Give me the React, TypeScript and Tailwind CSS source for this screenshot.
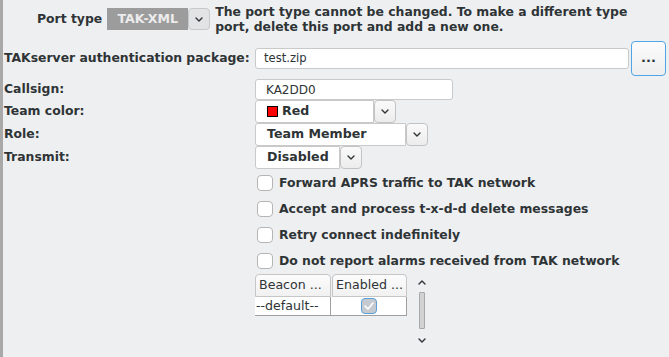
import React from 'react';

// small chevron used in combo buttons and the scrollbar
function Chevron({ up = false, className = '' }: { up?: boolean; className?: string }) {
  return (
    <svg width="8" height="5" viewBox="0 0 8 5" className={className}>
      <path
        d={up ? 'M1 4 L4 1 L7 4' : 'M1 1 L4 4 L7 1'}
        fill="none"
        stroke="#2e3436"
        strokeWidth="1.4"
        strokeLinecap="round"
        strokeLinejoin="round"
      />
    </svg>
  );
}

function ComboButton() {
  return (
    <div className="w-[22px] h-[23px] flex items-center justify-center bg-gradient-to-b from-[#fafafa] to-[#ececec] border border-[#c3c3c3] rounded-[4px]">
      <Chevron />
    </div>
  );
}

function Select({ width, children }: { width: string; children: React.ReactNode }) {
  return (
    <div className="flex items-center h-[23px]">
      <div className={`${width} h-[23px] bg-white border border-[#c9c9c9] rounded-l-[3px] flex items-center pl-[11px] font-bold text-[12.6px]`}>
        {children}
      </div>
      <ComboButton />
    </div>
  );
}

function Checkbox({ label }: { label: string }) {
  return (
    <div className="h-[26px] flex items-center pl-[2px]">
      <div className="w-[16px] h-[16px] bg-white border border-[#b5b5b5] rounded-[4px]" />
      <span className="ml-[6px] font-bold text-[12.4px] whitespace-nowrap">{label}</span>
    </div>
  );
}

function Label({ children }: { children: React.ReactNode }) {
  return <div className="w-[251px] font-bold text-[12.4px] leading-none whitespace-nowrap">{children}</div>;
}

export default function App() {
  return (
    <div className="w-[669px] h-[357px] overflow-hidden bg-[#eeeff1] border-l-[3px] border-[#a9a9a9] text-[#2e3436] font-['DejaVu_Sans',sans-serif]">
      <div className="pl-[1px]">
        {/* Port type */}
        <div className="pt-[4px] flex items-center">
          <span className="ml-[33px] font-bold text-[12.4px]">Port type</span>
          <div className="ml-[5px] w-[81px] h-[22px] bg-[#9c9c9c] flex items-center justify-center text-[#ececec] font-bold text-[12.6px]">
            TAK-XML
          </div>
          <div className="w-[22px] h-[22px] flex items-center justify-center bg-[#e2e3e5] border border-[#c8c8c8] rounded-[4px]">
            <Chevron />
          </div>
          <div className="ml-[5px] font-bold text-[12.4px] leading-[15px] whitespace-nowrap">
            <div>The port type cannot be changed. To make a different type</div>
            <div>port, delete this port and add a new one.</div>
          </div>
        </div>

        {/* auth package */}
        <div className="mt-[7px] h-[35px] flex items-center">
          <Label>TAKserver authentication package:</Label>
          <div className="w-[374px] h-[21px] bg-white border border-[#c9c9c9] rounded-[3px] flex items-center pl-[8px] text-[11.6px]">
            test.zip
          </div>
          <div className="ml-[2px] w-[35px] h-[35px] border border-[#4fa6e6] rounded-[4px] bg-gradient-to-b from-[#fbfbfb] to-[#eeeeee] flex items-center justify-center pb-[2px] text-[13px] font-bold">
            ...
          </div>
        </div>

        {/* callsign */}
        <div className="mt-[3px] h-[21px] flex items-center">
          <Label>Callsign:</Label>
          <div className="w-[198px] h-[21px] bg-white border border-[#c9c9c9] rounded-[3px] flex items-center pl-[10px] text-[12px]">
            KA2DD0
          </div>
        </div>

        <div className="h-[23px] flex items-center">
          <Label>Team color:</Label>
          <Select width="w-[119px]">
            <span className="w-[11px] h-[11px] bg-[#ff0000] border border-black mr-[4px]" />
            Red
          </Select>
        </div>

        <div className="h-[23px] flex items-center">
          <Label>Role:</Label>
          <Select width="w-[151px]">Team Member</Select>
        </div>

        <div className="h-[23px] flex items-center">
          <Label>Transmit:</Label>
          <Select width="w-[85px]">Disabled</Select>
        </div>

        {/* options */}
        <div className="flex pt-[1px]">
          <div className="w-[251px]" />
          <div>
            <Checkbox label="Forward APRS traffic to TAK network" />
            <Checkbox label="Accept and process t-x-d-d delete messages" />
            <Checkbox label="Retry connect indefinitely" />
            <Checkbox label="Do not report alarms received from TAK network" />

            {/* beacon table */}
            <div className="flex">
              <div className="w-[152px] text-[12.6px]">
                <div className="flex h-[23px] gap-[1px]">
                  <div className="w-[76px] bg-gradient-to-b from-[#fcfcfc] to-[#f1f1f1] border border-[#c6c6c6] rounded-t-[4px] flex items-center pl-[3px] whitespace-nowrap">
                    Beacon ...
                  </div>
                  <div className="w-[75px] bg-gradient-to-b from-[#fcfcfc] to-[#f1f1f1] border border-[#c6c6c6] rounded-t-[4px] flex items-center pl-[3px] whitespace-nowrap">
                    Enabled ...
                  </div>
                </div>
                <div className="flex h-[19px] bg-white border-b border-r border-[#a0a0a0]">
                  <div className="w-[76px] border-r border-[#a0a0a0] flex items-center pl-[1px]">
                    --default--
                  </div>
                  <div className="flex-1 flex items-center justify-center">
                    <div className="w-[16px] h-[16px] rounded-[4px] border border-[#5b9fd8] bg-[#c5cad0] flex items-center justify-center">
                      <svg width="10" height="8" viewBox="0 0 10 8">
                        <path d="M1 4 L4 7 L9 1" fill="none" stroke="#ffffff" strokeWidth="1.6" strokeLinecap="round" strokeLinejoin="round" />
                      </svg>
                    </div>
                  </div>
                </div>
              </div>

              {/* scrollbar */}
              <div className="ml-[10px] w-[10px] flex flex-col items-center pt-[6px]">
                <Chevron up />
                <div className="mt-[7px] w-[6px] h-[37px] bg-[#d2d2d2] border border-[#a8a8a8] rounded-[1px]" />
                <div className="mt-[9px]">
                  <Chevron />
                </div>
              </div>
            </div>
          </div>
        </div>
      </div>
    </div>
  );
}
